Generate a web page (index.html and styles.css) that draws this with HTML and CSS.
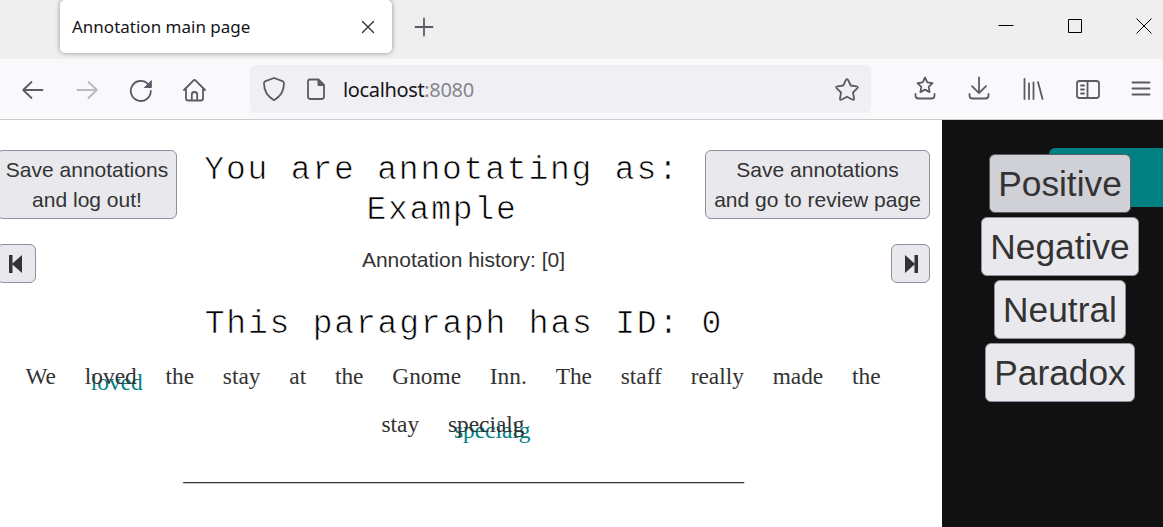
FILE: index.html
```html
<!DOCTYPE html>
<html lang="en">
<head>
<meta charset="utf-8">
<title>Annotation main page</title>
<link rel="stylesheet" href="styles.css">
</head>
<body>
<header class="tabs">
  <div class="tab"><span class="tab-title">Annotation main page</span>
    <svg class="tab-close" width="14" height="14" viewBox="0 0 14 14"><path d="M1.5 1.5l11 11M12.5 1.5l-11 11"/></svg>
  </div>
  <svg class="new-tab" width="20" height="20" viewBox="0 0 20 20"><path d="M10 1.500v17M1.500 10h17"/></svg>
  <div class="window-controls">
    <svg width="16" height="16" viewBox="0 0 16 16"><path d="M.5 7.5h15"/></svg>
    <svg width="16" height="16" viewBox="0 0 16 16"><path d="M1.5 1.5h13v13h-13z"/></svg>
    <svg width="16" height="16" viewBox="0 0 16 16"><path d="M.5.5l15 15M15.5.5l-15 15"/></svg>
  </div>
</header>
<nav class="toolbar">
  <div class="nav-icons">
    <svg width="24" height="24" viewBox="0 0 24 24"><path d="M21.500 12H2.500M10.500 4L2.200 12l8.300 8"/></svg>
    <svg class="disabled" width="24" height="24" viewBox="0 0 24 24"><path d="M2.500 12h19M13.500 4l8.300 8-8.300 8"/></svg>
    <svg width="24" height="24" viewBox="0 0 24 24"><path d="M21.800 13A10 10 0 1 1 19 6"/><path class="solid" d="M22.300 3v6.500h-6.500z"/></svg>
    <svg width="24" height="24" viewBox="0 0 24 24"><path d="M1 12L10.300 2.600q1.200-1.200 2.400 0L22 12M3 10.500v9.700q0 2.300 2.300 2.300h12.400q2.300 0 2.300-2.300v-9.700M8.800 22v-5.500q0-2.500 2.700-2.500t2.700 2.500V22"/></svg>
  </div>
  <div class="address">
    <svg class="shield" width="24" height="26" viewBox="0 0 24 26"><path d="M12 2l8.500 3.200q1.500.6 1.500 2.100C22 15.500 18.500 20.500 12 24.200 5.500 20.500 2 15.500 2 7.300q0-1.500 1.500-2.100z"/></svg>
    <svg class="page-icon" width="20" height="24" viewBox="0 0 20 24"><path d="M4 2.500h8.500l5.500 5.500v11.500q0 2.500-2.500 2.500h-11q-2.500 0-2.500-2.500V4.500q0-2 2-2z"/><path class="solid" d="M12 2.500v6h6z"/></svg>
    <span class="url">localhost<span class="port">:8080</span></span>
    <svg class="star" width="26" height="26" viewBox="0 0 26 26"><path d="M11.800 3.200q1.200-2 2.400 0l2.500 5.300 5.800.8q2.300.4.700 2.100l-4.200 4.100 1 5.800q.3 2.300-1.800 1.200L13 19.700l-5.200 2.800q-2.100 1.100-1.800-1.200l1-5.800-4.200-4.100q-1.600-1.700.7-2.100l5.800-.8z"/></svg>
  </div>
  <div class="tool-icons">
    <svg width="24" height="26" viewBox="0 0 24 26"><path d="M12 1.500l2.300 4.800 5.200.8-3.800 3.700.9 5.300-4.600-2.500-4.600 2.500.9-5.300-3.800-3.700 5.200-.8zM2.500 18v1.500q0 3 3 3h13q3 0 3-3V18"/></svg>
    <svg width="24" height="26" viewBox="0 0 24 26"><path d="M12 1.500v15.500M5 10.200l7 7 7-7M2.500 18v1.500q0 3 3 3h13q3 0 3-3V18"/></svg>
    <svg width="24" height="26" viewBox="0 0 24 26"><path d="M3.500 3v20M8 7.500V23M12.500 6.500V23M17 6l4.500 17"/></svg>
    <svg width="26" height="26" viewBox="0 0 26 26"><rect x="2" y="5" width="22" height="17" rx="2.500"/><path d="M12.500 5v17"/><path d="M6 9.500h3M6 13.500h3M6 17.500h3"/></svg>
    <svg width="20" height="26" viewBox="0 0 20 26"><path d="M1.500 6.500h17M1.500 12.500h17M1.500 18.500h17"/></svg>
  </div>
</nav>
<div class="page">
  <main>
    <div class="top">
      <button class="button save logout">Save annotations<br>and log out!</button>
      <h1>You are annotating as:<br>Example</h1>
      <button class="button save review">Save annotations<br>and go to review page</button>
    </div>
    <div class="history">
      <button class="button step previous"><svg width="14" height="20" viewBox="0 0 14 20"><path d="M0 1h3.500v8.500L13 1v18L3.500 10.500V19H0z"/></svg></button>
      <span>Annotation history: [0]</span>
      <button class="button step next"><svg width="14" height="20" viewBox="0 0 14 20"><path d="M14 1h-3.500v8.500L1 1v18l9.500-8.500V19H14z"/></svg></button>
    </div>
    <h2>This paragraph has ID: 0</h2>
    <div class="words">
      <span>We</span><span class="marked">loved</span><span>the</span><span>stay</span><span>at</span><span>the</span><span>Gnome</span><span>Inn.</span><span>The</span><span>staff</span><span>really</span><span>made</span><span>the</span><span>stay</span><span class="marked">specialg</span>
    </div>
    <div class="rule">________________________________________________</div>
  </main>
  <aside>
    <div class="selected-color"></div>
    <div class="labels">
      <button class="button label active">Positive</button>
      <button class="button label">Negative</button>
      <button class="button label">Neutral</button>
      <button class="button label">Paradox</button>
    </div>
  </aside>
</div>
</body>
</html>
```

FILE: styles.css
```css
* { box-sizing: border-box; }
body { margin: 0; width: 1163px; height: 527px; overflow: hidden; background: #fff; color: #333; font-family: "Liberation Sans", sans-serif; }
svg { display: block; flex: none; fill: none; stroke: #5b5b66; stroke-width: 1.8; stroke-linecap: round; stroke-linejoin: round; }
.solid { fill: #5b5b66; stroke-width: 1; }

.tabs { display: flex; height: 59px; padding-left: 60px; background: #efefef; }
.tab { display: flex; align-items: center; justify-content: space-between; width: 332px; height: 53px; padding: 0 17px 0 12px; border-radius: 5px; background: #fff; box-shadow: 0 0 5px rgba(0, 0, 0, .4); }
.tab-title { color: #15141a; font: 17px/24px "Noto Sans", sans-serif; white-space: nowrap; }
.tab-close { stroke: #333; stroke-width: 1.4; }
.new-tab { margin: 17px 0 0 22px; }
.window-controls { display: flex; gap: 53px; margin: 18px 11px 0 auto; }
.window-controls svg { stroke: #000; stroke-width: 1; stroke-linecap: butt; stroke-linejoin: miter; }

.toolbar { display: flex; align-items: center; height: 61px; padding-left: 21px; border-bottom: 1px solid #ccc; background: #f9f9fb; }
.nav-icons { display: flex; gap: 30px; padding-top: 2px; }
.disabled { opacity: .4; }
.address { display: flex; align-items: center; width: 621px; height: 48px; margin-left: 43px; padding: 0 11px 0 12px; border-radius: 6px; background: #f0f0f4; }
.page-icon { margin-left: 20px; }
.url { margin: 2px 0 0 17px; color: #15141a; font: 20px/28px "Noto Sans", sans-serif; letter-spacing: -.35px; }
.port { color: #85858e; }
.star { margin: 2px 0 0 auto; }
.tool-icons { display: flex; align-items: center; gap: 30px; margin-left: 42px; }

.page { display: flex; height: 407px; }
main { width: 942px; }
.top { display: flex; height: 108px; padding: 30px 12px 0 0; justify-content: space-between; }
.button { margin: 0; border: 1px solid #8f8f9d; border-radius: 6px; background: #e9e9ed; color: #333; font-family: inherit; text-align: center; white-space: nowrap; }
.save { height: 69px; padding: 4px 0; font-size: 21px; line-height: 30px; }
.logout { width: 180px; margin-left: -3px; }
.review { width: 225px; }
h1, h2 { margin: 0; color: #000; font: 33px/40px "Liberation Mono", monospace; letter-spacing: 1.8px; text-align: center; white-space: nowrap; -webkit-text-stroke: .7px #fff; }
h1 { padding: 1px 0 0 2px; }
.history { display: flex; align-items: center; justify-content: space-between; margin-top: 16px; padding-right: 12px; height: 39px; font-size: 21px; }
.history span { line-height: 30px; margin-top: -7px; }
.step { display: flex; align-items: center; justify-content: center; width: 39px; height: 39px; padding: 0; }
.step svg { fill: #333; stroke: none; }
.previous { margin-left: -3px; padding-right: 2px; }
.next { padding-left: 1px; }
h2 { width: 928px; margin-top: 22px; }
.words { display: flex; flex-wrap: wrap; justify-content: center; column-gap: 28.8px; width: 906px; margin-top: 7px; font: 23.36px/48px "Liberation Serif", serif; }
.marked { text-shadow: 6px 6px teal; }
.rule { width: 927px; font: 23.36px/48px "Liberation Serif", serif; text-align: center; }

aside { position: relative; width: 221px; background: #111; }
.selected-color { position: absolute; top: 28px; right: 0; width: 114px; height: 59px; border-radius: 6px 0 0 0; background: teal; }
.labels { position: relative; display: flex; flex-direction: column; align-items: center; gap: 4px; width: 236px; padding-top: 34px; }
.label { height: 59px; padding: 0 8px; font-size: 35.3px; line-height: 57px; }
.active { background: #d0d0d7; border-color: #5b5b66; }
```
